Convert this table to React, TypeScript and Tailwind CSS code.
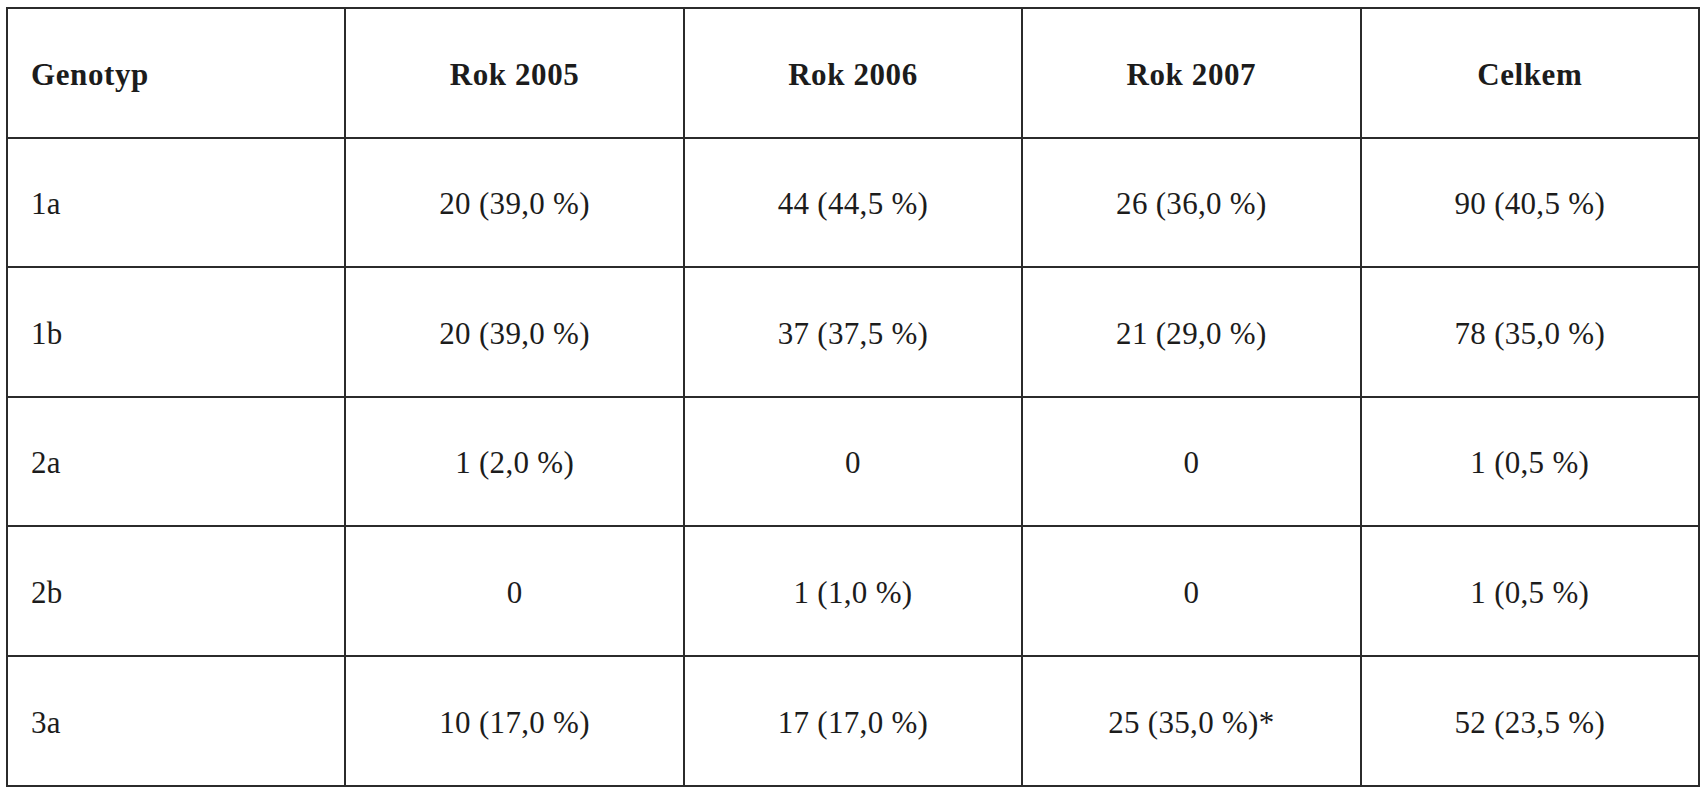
import React from "react";

const headers = ["Genotyp", "Rok 2005", "Rok 2006", "Rok 2007", "Celkem"];

const rows: string[][] = [
  ["1a", "20 (39,0 %)", "44 (44,5 %)", "26 (36,0 %)", "90 (40,5 %)"],
  ["1b", "20 (39,0 %)", "37 (37,5 %)", "21 (29,0 %)", "78 (35,0 %)"],
  ["2a", "1 (2,0 %)", "0", "0", "1 (0,5 %)"],
  ["2b", "0", "1 (1,0 %)", "0", "1 (0,5 %)"],
  ["3a", "10 (17,0 %)", "17 (17,0 %)", "25 (35,0 %)*", "52 (23,5 %)"],
];

const Cell: React.FC<{ first: boolean; bold?: boolean; children: React.ReactNode }> = ({
  first,
  bold,
  children,
}) => (
  <div
    className={
      "h-[129.6px] pt-[4px] border-r-2 border-b-2 border-[#2b2b2b] flex items-center whitespace-pre " +
      (first ? "justify-start pl-[23px] " : "justify-center ") +
      (bold ? "font-bold text-[31px] tracking-[0.6px]" : "text-[31px] tracking-[0.3px]")
    }
  >
    {children}
  </div>
);

export default function App() {
  return (
    <div className="w-[1706px] h-[800px] bg-white pt-[7px] pl-[6px] text-[#1c1c1c] font-['Liberation_Serif',serif]">
      <div className="grid grid-cols-[repeat(5,338.4px)] w-fit border-l-2 border-t-2 border-[#2b2b2b]">
        {headers.map((h, i) => (
          <Cell key={h} first={i === 0} bold>
            {h}
          </Cell>
        ))}
        {rows.map((r) =>
          r.map((v, i) => (
            <Cell key={r[0] + i} first={i === 0}>
              {v}
            </Cell>
          ))
        )}
      </div>
    </div>
  );
}
